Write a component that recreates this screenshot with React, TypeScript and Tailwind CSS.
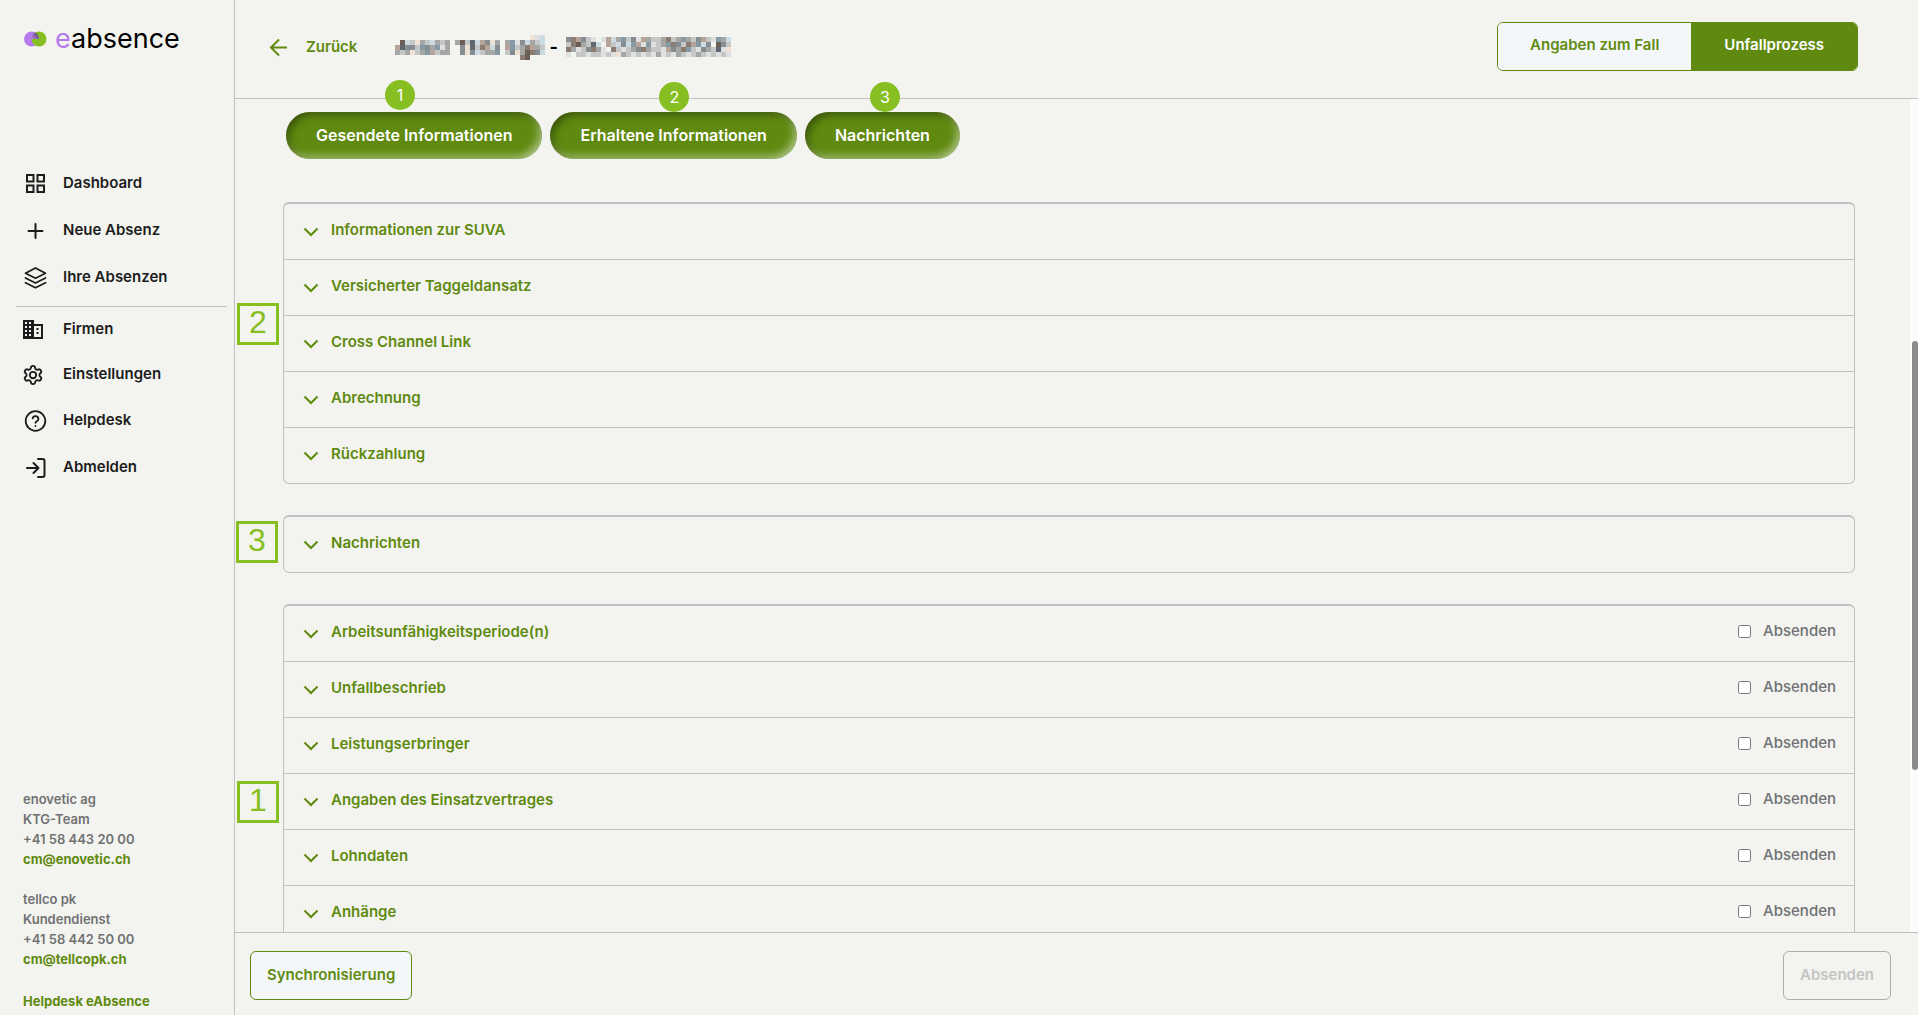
import type { ReactNode } from "react";

const suvaSections = [
  "Informationen zur SUVA",
  "Versicherter Taggeldansatz",
  "Cross Channel Link",
  "Abrechnung",
  "Rückzahlung",
];

const sendSections = [
  "Arbeitsunfähigkeitsperiode(n)",
  "Unfallbeschrieb",
  "Leistungserbringer",
  "Angaben des Einsatzvertrages",
  "Lohndaten",
  "Anhänge",
];

// Redacted personal data, one letter per 5px tile
const palette: Record<string, string> = {
  a: "#dfe1e0",
  b: "#c5c7c7",
  c: "#a5a7a7",
  d: "#858c92",
  e: "#5f686e",
  f: "#ccdae1",
  g: "#8899a6",
  h: "#eee1d6",
  i: "#b5a497",
  j: "#8a7c70",
  k: "#6b5f55",
};

const nameTiles = [
  "...........................haf",
  ".kfbhcbfcbc.ckbefidhc.cgadfcbf",
  "ieddbgdcgac..dhebjifd.igbcjicb",
  "cbchbcgibcc..dhdfbccg.bdhckjdf",
  ".........................jk...",
];

const numberTiles = [
  "djidba.aifcgbdaicbbcjbcgcbdibagcf",
  "bjkcbef.ibfdfgiagabcgjdbjigfd.kdb",
  "jcabdjca.jbabcdjcbbaidcjgbadcbeah",
  "a.bbabbabahcbababacabacbabcbababa",
];

function Mosaic({ rows, className }: { rows: string[]; className: string }) {
  const cols = Math.max(...rows.map((row) => row.length));
  return (
    <svg
      width={cols * 5}
      height={rows.length * 5}
      className={className}
      shapeRendering="crispEdges"
      aria-hidden="true"
    >
      {rows.map((row, y) =>
        row
          .split("")
          .map((tile, x) =>
            tile === "." ? null : (
              <rect key={`${x}-${y}`} x={x * 5} y={y * 5} width="5" height="5" fill={palette[tile]} />
            )
          )
      )}
    </svg>
  );
}

function Icon({ size = 24, stroke = 2, children }: { size?: number; stroke?: number; children: ReactNode }) {
  return (
    <svg
      width={size}
      height={size}
      viewBox="0 0 24 24"
      fill="none"
      stroke="currentColor"
      strokeWidth={stroke}
      strokeLinecap="round"
      strokeLinejoin="round"
      className="shrink-0"
      aria-hidden="true"
    >
      {children}
    </svg>
  );
}

function Logo() {
  return (
    <a href="#" className="flex items-center gap-2 text-[27px] leading-8 text-black">
      <svg width="23" height="16" viewBox="0 0 23 16" aria-hidden="true">
        <defs>
          <linearGradient id="overlap" x1="0" y1="1" x2="1" y2="0">
            <stop offset="0" stopColor="#b57bee" />
            <stop offset="1" stopColor="#4f4560" />
          </linearGradient>
        </defs>
        <circle cx="7.5" cy="8" r="7.5" fill="#b57bee" />
        <circle cx="15" cy="8" r="7.5" fill="#87bf22" />
        <path d="M11.3 1.5A7.5 7.5 0 0 0 7.6 8H15A7.5 7.5 0 0 0 11.3 1.5Z" fill="url(#overlap)" />
      </svg>
      <span>
        <span className="text-[#b57bee]">e</span>absence
      </span>
    </a>
  );
}

function NavItem({ label, tight, children }: { label: string; tight?: boolean; children: ReactNode }) {
  return (
    <a
      href="#"
      className={
        tight
          ? "flex h-[45px] items-center text-[15px] font-semibold text-[#1c1c1c]"
          : "flex h-[47px] items-center text-[15px] font-semibold text-[#1c1c1c]"
      }
    >
      <span className={tight ? "-ml-px flex w-[41px]" : "flex w-10"}>{children}</span>
      {label}
    </a>
  );
}

function Sidebar() {
  return (
    <aside className="flex w-[235px] shrink-0 flex-col border-r border-[#bfc1c4]">
      <div className="h-40 pt-[23px] pl-6">
        <Logo />
      </div>

      <nav>
        <div className="pl-[23px]">
          <NavItem label="Dashboard">
            <Icon>
              <path d="M4 3h6.500v6.500H4zM14.500 3H21v6.500h-6.500zM4 13.500h6.500V20H4zM14.500 13.500H21V20h-6.500z" strokeLinejoin="miter" />
            </Icon>
          </NavItem>
          <NavItem label="Neue Absenz">
            <Icon>
              <path d="M12.500 5v14M5.500 12h14" />
            </Icon>
          </NavItem>
          <NavItem label="Ihre Absenzen">
            <Icon stroke={1.8}>
              <path d="M12.500 2 22.500 7.200 12.500 12.200 2.500 7.200zM2.500 12l10 5 10-5M2.500 16.800l10 5 10-5" />
            </Icon>
          </NavItem>
        </div>

        <hr className="mt-[5px] mr-[7px] ml-4 border-[#bfc1c4]" />

        <div className="pl-[23px]">
          <NavItem label="Firmen" tight>
            <svg width="21" height="21" viewBox="0 0 21 21" aria-hidden="true">
              <path d="M1 1h11v4h9v15H1z" fill="#1c1c1c" />
              <path
                d="M3 3h2v2H3zM7 3h2v2H7zM3 7h2v2H3zM7 7h2v2H7zM3 11h2v2H3zM7 11h2v2H7zM3 15h2v2H3zM7 15h2v2H7zM12 7h7v11h-7z"
                fill="#f3f4ef"
              />
              <path d="M14.500 9h2v2h-2zM14.500 13h2v2h-2z" fill="#1c1c1c" />
            </svg>
          </NavItem>
          <NavItem label="Einstellungen" tight>
            <Icon size={22}>
              <path d="M9.671 4.136a2.340 2.340 0 0 1 4.659 0 2.340 2.340 0 0 0 3.319 1.915 2.340 2.340 0 0 1 2.330 4.033 2.340 2.340 0 0 0 0 3.831 2.340 2.340 0 0 1-2.330 4.033 2.340 2.340 0 0 0-3.319 1.915 2.340 2.340 0 0 1-4.659 0 2.340 2.340 0 0 0-3.320-1.915 2.340 2.340 0 0 1-2.330-4.033 2.340 2.340 0 0 0 0-3.831A2.340 2.340 0 0 1 6.350 6.051a2.340 2.340 0 0 0 3.319-1.915" />
              <circle cx="12" cy="12" r="3.500" />
            </Icon>
          </NavItem>
          <NavItem label="Helpdesk">
            <Icon stroke={1.8}>
              <circle cx="12.500" cy="12" r="9.800" />
              <path d="M9.700 9.300a2.900 2.900 0 0 1 5.700.9c0 2-2.900 2.200-2.900 3.600M12.500 17h.01" />
            </Icon>
          </NavItem>
          <NavItem label="Abmelden">
            <Icon>
              <path d="M15 3h4.500a2 2 0 0 1 2 2v14a2 2 0 0 1-2 2H15M10.500 7l5 5-5 5M15.500 12H4" />
            </Icon>
          </NavItem>
        </div>
      </nav>

      <div className="mt-auto flex flex-col gap-5 pb-1 pl-[23px] text-[13px] leading-5 font-semibold text-[#707173]">
        <address className="not-italic">
          enovetic ag
          <br />
          KTG-Team
          <br />
          +41 58 443 20 00
          <br />
          <a href="mailto:cm@enovetic.ch" className="font-bold text-[#5f8a0f]">
            cm@enovetic.ch
          </a>
        </address>
        <address className="not-italic">
          tellco pk
          <br />
          Kundendienst
          <br />
          +41 58 442 50 00
          <br />
          <a href="mailto:cm@tellcopk.ch" className="font-bold text-[#5f8a0f]">
            cm@tellcopk.ch
          </a>
        </address>
        <a href="#" className="mt-0.5 font-bold text-[#5f8a0f]">
          Helpdesk eAbsence
        </a>
      </div>
    </aside>
  );
}

function PillButton({ label, badge, badgeClass }: { label: string; badge: string; badgeClass: string }) {
  return (
    <div className="relative">
      <button
        type="button"
        className="h-[47px] rounded-3xl bg-[#5f8a0f] px-[30px] pb-0.5 text-base font-semibold text-white shadow-[inset_4px_4px_10px_-2px_rgba(0,0,0,0.45),inset_-4px_-4px_10px_-2px_rgba(255,255,255,0.55)]"
      >
        {label}
      </button>
      <span
        className={`absolute flex size-[30px] items-center justify-center rounded-full bg-[#87bf22] text-base text-white ${badgeClass}`}
      >
        {badge}
      </span>
    </div>
  );
}

function Marker({ children, className }: { children: string; className: string }) {
  return (
    <span
      className={`absolute flex size-[42px] justify-center border-3 border-[#87bf22] text-[32px] leading-8 text-[#87bf22] font-['Liberation_Sans',sans-serif] ${className}`}
    >
      {children}
    </span>
  );
}

function Panel({ items, sendable, children }: { items: string[]; sendable?: boolean; children?: ReactNode }) {
  return (
    <section className="relative">
      <div className="divide-y divide-[#bfc1c4] rounded-md border border-t-2 border-[#bfc1c4]">
        {items.map((item) => (
          <div key={item} className="flex h-14 items-center justify-between px-[18px] pb-0.5 last:h-[55px]">
            <button type="button" className="flex items-center gap-[11px] text-[15px] font-semibold text-[#5f8a0f]">
              <svg width="18" height="18" viewBox="0 0 18 18" fill="none" className="mt-0.5" aria-hidden="true">
                <path d="M2.500 5.500 9 12l6.500-6.500" stroke="currentColor" strokeWidth="2" />
              </svg>
              {item}
            </button>
            {sendable && (
              <label className="flex items-center gap-3 pb-0.5 text-[15px] font-medium text-[#707173]">
                <input type="checkbox" className="size-[13px]" />
                Absenden
              </label>
            )}
          </div>
        ))}
      </div>
      {children}
    </section>
  );
}

export default function App() {
  return (
    <div className="flex h-screen overflow-hidden bg-[#f3f4ef] font-['Inter',sans-serif]">
      <Sidebar />

      <div className="flex min-w-0 flex-1 flex-col">
        {/* Header */}
        <header className="flex h-[99px] shrink-0 items-center justify-between border-b border-[#bfc1c4] pr-[60px] pb-1.5 pl-[34px]">
          <div className="flex items-center pt-0.5">
            <button type="button" className="flex items-center gap-[18px] text-[15px] font-semibold text-[#5f8a0f]">
              <svg width="19" height="19" viewBox="0 0 19 19" fill="none" aria-hidden="true">
                <path d="M18 9.500H2M10 1.500l-8 8 8 8" stroke="currentColor" strokeWidth="2" />
              </svg>
              Zurück
            </button>
            <h1 className="ml-[38px] flex items-center text-lg font-bold text-black">
              <Mosaic rows={nameTiles} className="mr-1" />
              -
              <Mosaic rows={numberTiles} className="ml-2" />
            </h1>
          </div>

          <div className="flex h-[49px] overflow-hidden rounded-md border border-[#5f8a0f] text-[15px]">
            <button type="button" className="bg-[#f3f7fa] px-8 pb-0.5 font-semibold text-[#5f8a0f]">
              Angaben zum Fall
            </button>
            <button type="button" className="bg-[#5f8a0f] px-[33px] pb-0.5 font-semibold text-white">
              Unfallprozess
            </button>
          </div>
        </header>

        {/* Content */}
        <div className="flex min-h-0 flex-1">
          <main className="flex min-w-0 flex-1 flex-col">
            <div className="flex gap-2 pt-[13px] pl-[51px]">
              <PillButton label="Gesendete Informationen" badge="1" badgeClass="-top-8 left-[99px]" />
              <PillButton label="Erhaltene Informationen" badge="2" badgeClass="-top-[30px] left-[109px]" />
              <PillButton label="Nachrichten" badge="3" badgeClass="-top-[30px] left-[65px]" />
            </div>

            <div className="mt-[43px] flex min-h-0 flex-1 flex-col gap-[31px] overflow-hidden pr-[55px] pl-12">
              <Panel items={suvaSections}>
                <Marker className="top-[101px] -left-[46px]">2</Marker>
              </Panel>
              <Panel items={["Nachrichten"]}>
                <Marker className="top-[6px] -left-[47px]">3</Marker>
              </Panel>
              <Panel items={sendSections} sendable>
                <Marker className="top-[177px] -left-[46px]">1</Marker>
              </Panel>
            </div>
          </main>

          {/* Scrollbar */}
          <div className="flex w-2 flex-col items-end bg-[#fcfcfc]">
            <div className="basis-[29%]" />
            <div className="w-1.5 basis-[51.5%] rounded-sm bg-[#8b8b8b]" />
          </div>
        </div>

        {/* Actions */}
        <footer className="flex h-[83px] shrink-0 items-center justify-between border-t border-[#bfc1c4] pt-0.5 pr-[27px] pl-[15px]">
          <button
            type="button"
            className="h-[49px] rounded-md border border-[#5f8a0f] bg-[#f3f7fa] px-4 text-[15px] font-semibold text-[#5f8a0f]"
          >
            Synchronisierung
          </button>
          <button
            type="button"
            disabled
            className="h-[49px] rounded-md border border-[#adadad] px-4 text-[15px] font-semibold text-[#c3c4c4]"
          >
            Absenden
          </button>
        </footer>
      </div>
    </div>
  );
}
